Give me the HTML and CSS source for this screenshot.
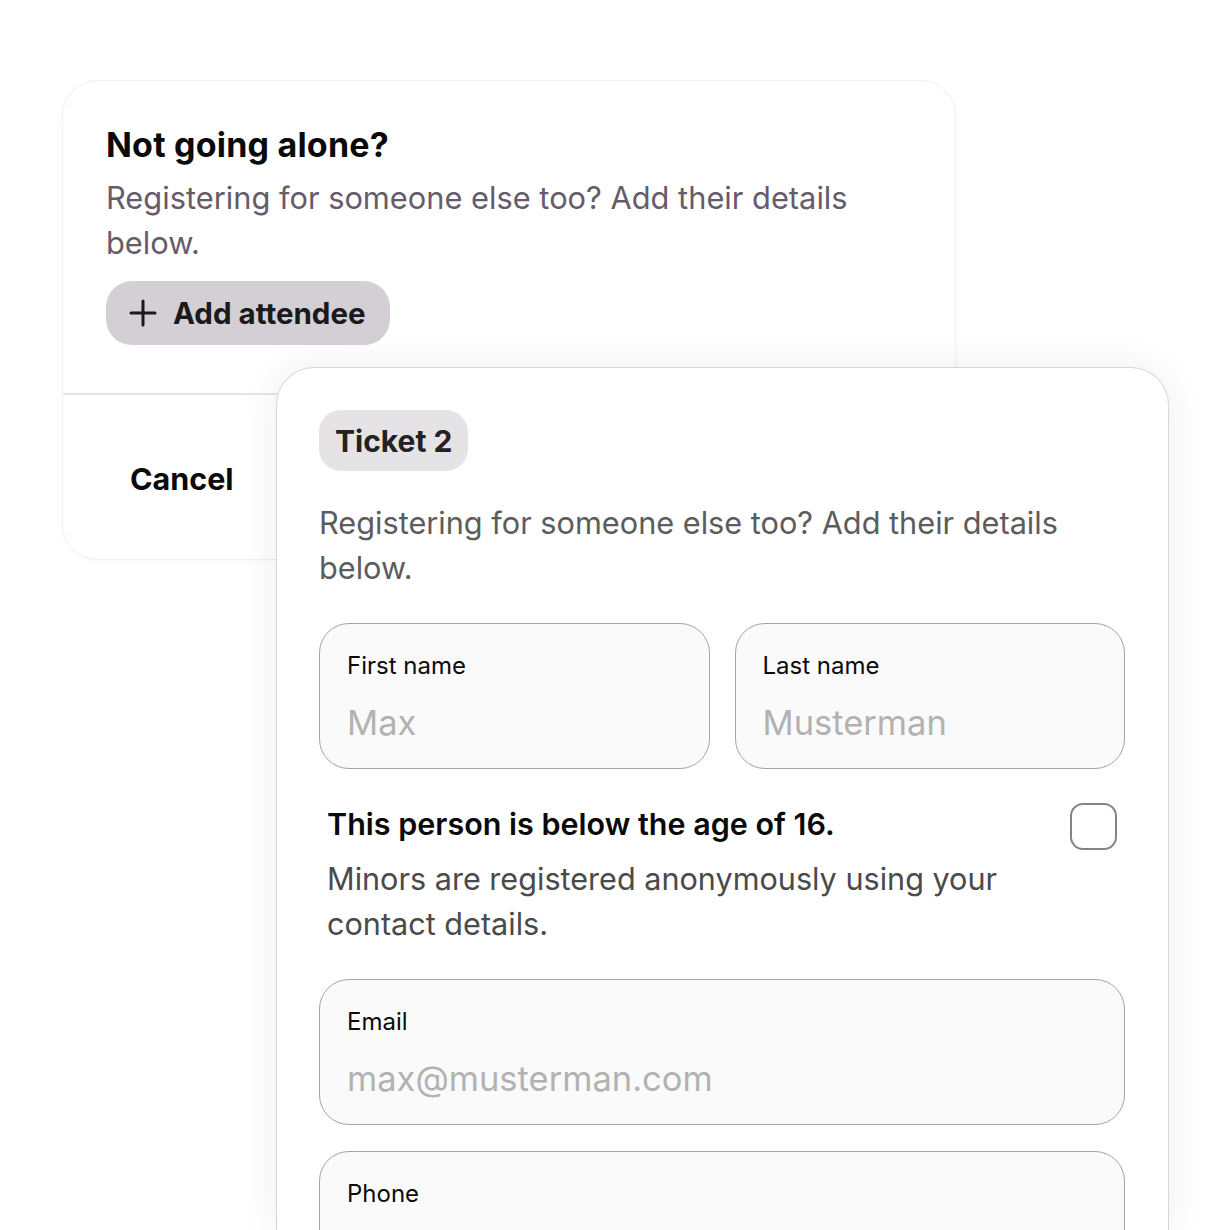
FILE: index.html
```html
<!DOCTYPE html>
<html lang="en">
<head>
<meta charset="utf-8">
<link rel="stylesheet" href="styles.css">
</head>
<body>
<div class="stage">
  <section class="back-card">
    <div class="back-top">
      <h2 class="back-title">Not going alone?</h2>
      <p class="back-desc">Registering for someone else too? Add their details below.</p>
      <button class="add-btn" type="button">
        <svg class="plus" viewBox="0 0 28 28" width="28" height="28"><path d="M14 2v24M2 14h24" stroke="#1a1a1a" stroke-width="3" stroke-linecap="round" fill="none"/></svg>
        <span>Add attendee</span>
      </button>
    </div>
    <div class="back-bottom">
      <span class="cancel">Cancel</span>
    </div>
  </section>

  <section class="front-card">
    <span class="badge">Ticket 2</span>
    <p class="front-desc">Registering for someone else too? Add their details below.</p>
    <div class="row2">
      <div class="field">
        <span class="label">First name</span>
        <span class="value">Max</span>
      </div>
      <div class="field">
        <span class="label">Last name</span>
        <span class="value">Musterman</span>
      </div>
    </div>
    <div class="minor">
      <div class="minor-head">
        <span class="minor-title">This person is below the age of 16.</span>
        <span class="checkbox"></span>
      </div>
      <p class="minor-desc">Minors are registered anonymously using your contact details.</p>
    </div>
    <div class="field">
      <span class="label">Email</span>
      <span class="value">max@musterman.com</span>
    </div>
    <div class="field field-phone">
      <span class="label">Phone</span>
      <span class="value"></span>
    </div>
  </section>
</div>
</body>
</html>
```

FILE: styles.css
```css
* { box-sizing: border-box; }
html, body {
  margin: 0;
  padding: 0;
  background: #ffffff;
  overflow: hidden;
  height: 1230px;
}
body {
  font-family: Inter, "Noto Sans", sans-serif;
  color: #111;
}
.stage {
  height: 1230px;
  overflow: hidden;
  padding: 80px 0 0 62px;
}
.back-card {
  width: 894px;
  height: 480px;
  border: 1px solid #f1f1f1;
  border-radius: 36px;
  background: #fff;
  box-shadow: 0 2px 10px rgba(0,0,0,0.025);
  display: flex;
  flex-direction: column;
  overflow: hidden;
}
.back-top {
  padding: 42px 43px 0 43px;
  height: 314px;
  border-bottom: 2px solid #e4e4e4;
}
.back-title {
  margin: 0;
  font-size: 34px;
  font-weight: 700;
  line-height: 44px;
  letter-spacing: 0.2px;
  color: #0a0a0a;
}
.back-desc {
  margin: 8px 0 0 0;
  font-size: 30.8px;
  line-height: 45px;
  color: #665b6a;
  width: 790px;
}
.add-btn {
  margin-top: 16px;
  height: 64px;
  padding: 0 24px 0 23px;
  display: inline-flex;
  align-items: center;
  gap: 16px;
  border: none;
  border-radius: 26px;
  background: #d4ced5;
  font-family: inherit;
  font-size: 29.5px;
  font-weight: 700;
  color: #1a1a1a;
}
.back-bottom {
  flex: 1;
  padding: 64px 0 0 67px;
}
.cancel {
  font-size: 30.5px;
  font-weight: 700;
  line-height: 40px;
  color: #0a0a0a;
}
.front-card {
  position: relative;
  margin: -193px 0 0 214px;
  width: 893px;
  height: 863px;
  overflow: hidden;
  border: 1.5px solid #d6d6d6;
  border-bottom: none;
  border-radius: 38px 38px 0 0;
  background: #fff;
  box-shadow: 0 0 40px rgba(0,0,0,0.07);
  padding: 42px 43px 0 42px;
  display: flex;
  flex-direction: column;
  align-items: flex-start;
}
.front-card > * {
  flex-shrink: 0;
}
.badge {
  height: 61px;
  padding: 0 16px;
  display: inline-flex;
  align-items: center;
  border-radius: 22px;
  background: #e5e3e6;
  font-size: 30px;
  font-weight: 700;
  color: #222;
}
.front-desc {
  margin: 29px 0 0 0;
  font-size: 30.7px;
  line-height: 45px;
  color: #5c5c5c;
  width: 790px;
}
.row2 {
  margin-top: 33px;
  width: 100%;
  display: grid;
  grid-template-columns: 1fr 1fr;
  gap: 25px;
}
.field {
  width: 100%;
  height: 146px;
  border: 1.5px solid #a9a1aa;
  border-radius: 30px;
  background: #fafafa;
  padding: 26px 27px 0 27px;
  display: flex;
  flex-direction: column;
}
.label {
  font-size: 24px;
  line-height: 32px;
  color: #0a0a0a;
}
.value {
  margin-top: 21px;
  font-size: 34.5px;
  line-height: 40px;
  color: #b2b2b2;
}
.minor {
  width: 100%;
  padding: 0 8px;
  margin-top: 33px;
}
.minor-head {
  display: flex;
  justify-content: space-between;
  align-items: flex-start;
}
.minor-title {
  font-size: 30.5px;
  font-weight: 600;
  line-height: 44px;
  color: #0a0a0a;
}
.checkbox {
  width: 47px;
  height: 47px;
  border: 2px solid #8a808b;
  border-radius: 13px;
  margin-top: 1px;
}
.minor-desc {
  margin: 6px 0 0 0;
  font-size: 30.6px;
  line-height: 45px;
  color: #4a4a4a;
  width: 720px;
}
.minor + .field {
  margin-top: 33px;
}
.field-phone {
  margin-top: 26px;
}
```
